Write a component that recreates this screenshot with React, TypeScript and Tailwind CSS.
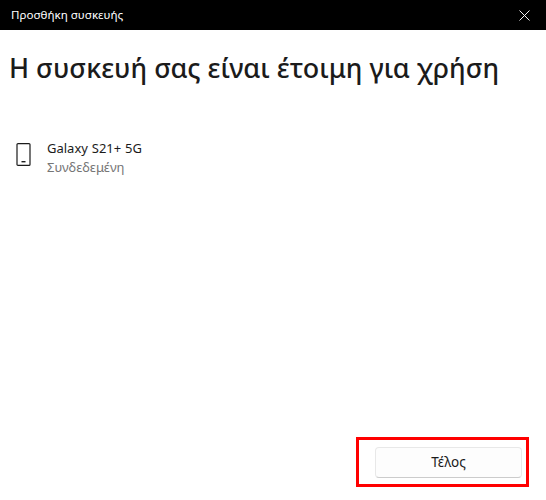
export default function App() {
  return (
    <div className="w-[546px] h-[500px] flex flex-col bg-white font-['Noto_Sans','Open_Sans',sans-serif] text-[#1b1b1b]">
      <div className="h-[30px] shrink-0 bg-black text-white flex items-center justify-between pl-[11px] pr-[16px]">
        <span className="text-[11.6px] leading-none">Προσθήκη συσκευής</span>
        <svg width="11" height="11" viewBox="0 0 11 11" fill="none" stroke="#f0f0f0" strokeWidth="1">
          <path d="M0.5 0.5L10.5 10.5M10.5 0.5L0.5 10.5" />
        </svg>
      </div>

      <h1 className="mt-[20px] ml-[9px] text-[26.9px] leading-[36px] font-medium whitespace-nowrap">
        Η συσκευή σας είναι έτοιμη για χρήση
      </h1>

      <div className="mt-[52px] ml-[16px] flex items-start gap-[16px]">
        <svg className="mt-[5px]" width="15" height="23" viewBox="0 0 15 23" fill="none">
          <rect x="1" y="0.6" width="13" height="21.8" rx="1" stroke="#1b1b1b" strokeWidth="1.2" />
          <rect x="5.5" y="18" width="4" height="1.4" fill="#1b1b1b" />
        </svg>
        <div className="flex flex-col">
          <span className="text-[13px] leading-[20px] [word-spacing:0.5px]">Galaxy S21+ 5G</span>
          <span className="text-[13px] leading-[18px] text-[#767676]">Συνδεδεμένη</span>
        </div>
      </div>

      <div className="mt-auto mb-[13px] mr-[17px] flex justify-end">
        <div className="w-[173px] h-[50px] border-[3px] border-[#ff0000] pl-[16px] pr-[4px] pt-[7px]">
          <button className="w-full h-[31px] bg-[#fdfdfd] border border-[#e8e8e8] border-b-[#cccccc] rounded-[4px] text-[13.5px] leading-none text-[#1b1b1b]">
            Τέλος
          </button>
        </div>
      </div>
    </div>
  )
}
